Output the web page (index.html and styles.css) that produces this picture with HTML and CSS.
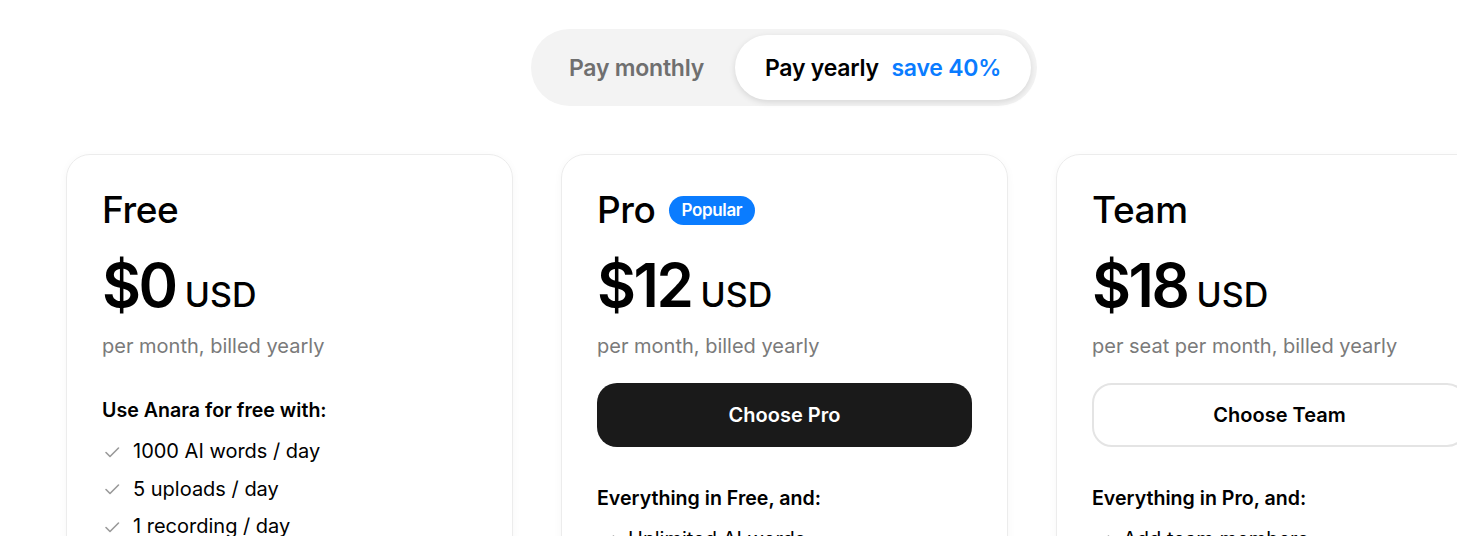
FILE: index.html
```html
<!DOCTYPE html>
<html lang="en">
<head>
<meta charset="utf-8">
<title>Pricing</title>
<link rel="stylesheet" href="styles.css">
</head>
<body>
<main class="page">
  <div class="toggle-row">
    <div class="toggle">
      <button class="opt">Pay monthly</button>
      <button class="opt active">Pay yearly <span class="save">save 40%</span></button>
    </div>
  </div>
  <section class="cards">
    <article class="card">
      <h2 class="plan">Free</h2>
      <div class="price"><span class="amount">$0</span><span class="cur">USD</span></div>
      <p class="sub">per month, billed yearly</p>
      <div class="features free">
        <h3 class="feat-title">Use Anara for free with:</h3>
        <ul>
          <li><svg class="check" viewBox="0 0 16 16"><path d="M2 8.5l4 4L14.5 4"/></svg>1000 AI words / day</li>
          <li><svg class="check" viewBox="0 0 16 16"><path d="M2 8.5l4 4L14.5 4"/></svg>5 uploads / day</li>
          <li><svg class="check" viewBox="0 0 16 16"><path d="M2 8.5l4 4L14.5 4"/></svg>1 recording / day</li>
        </ul>
      </div>
    </article>
    <article class="card">
      <h2 class="plan">Pro <span class="badge">Popular</span></h2>
      <div class="price"><span class="amount">$12</span><span class="cur">USD</span></div>
      <p class="sub">per month, billed yearly</p>
      <button class="cta dark">Choose Pro</button>
      <div class="features">
        <h3 class="feat-title">Everything in Free, and:</h3>
        <ul>
          <li><svg class="check" viewBox="0 0 16 16"><path d="M2 8.5l4 4L14.5 4"/></svg>Unlimited AI words</li>
        </ul>
      </div>
    </article>
    <article class="card">
      <h2 class="plan">Team</h2>
      <div class="price"><span class="amount">$18</span><span class="cur">USD</span></div>
      <p class="sub">per seat per month, billed yearly</p>
      <button class="cta light">Choose Team</button>
      <div class="features">
        <h3 class="feat-title">Everything in Pro, and:</h3>
        <ul>
          <li><svg class="check" viewBox="0 0 16 16"><path d="M2 8.5l4 4L14.5 4"/></svg>Add team members</li>
        </ul>
      </div>
    </article>
  </section>
</main>
</body>
</html>
```

FILE: styles.css
```css
html, body {
  margin: 0;
  padding: 0;
  background: #fff;
  overflow: hidden;
}
body {
  font-family: Inter, "Liberation Sans", sans-serif;
  color: #000;
}
.page {
  width: 1568px;
}
.toggle-row {
  display: flex;
  justify-content: center;
  padding-top: 29px;
}
.toggle {
  display: flex;
  background: #f3f3f3;
  border-radius: 999px;
  padding: 6px;
}
.opt {
  font-family: inherit;
  font-size: 23px;
  font-weight: 600;
  letter-spacing: -0.01em;
  color: #6f6f6f;
  background: transparent;
  border: 0;
  border-radius: 999px;
  height: 65px;
  padding: 0 31px 0 32px;
  cursor: pointer;
}
.opt.active {
  background: #fff;
  color: #000;
  padding: 0 30px;
  box-shadow: 0 2px 6px rgba(0,0,0,0.12);
}
.save {
  color: #0a7cff;
  margin-left: 7px;
}
.cards {
  display: flex;
  gap: 48px;
  padding: 48px 66px 0;
}
.card {
  flex: 0 0 447px;
  box-sizing: border-box;
  border: 1px solid #ececec;
  border-radius: 24px;
  box-shadow: 0 2px 8px rgba(0,0,0,0.04);
  padding: 30px 35px 40px;
  height: 420px;
}
.plan {
  margin: 0;
  font-size: 37px;
  font-weight: 500;
  letter-spacing: -0.01em;
  display: flex;
  align-items: center;
  gap: 13px;
  line-height: 50px;
}
.badge {
  background: #0a7cff;
  color: #fff;
  font-size: 17px;
  font-weight: 600;
  border-radius: 999px;
  padding: 0 13px;
  line-height: 29px;
  height: 29px;
}
.price {
  display: flex;
  align-items: baseline;
  gap: 9px;
  margin-top: 15px;
}
.amount {
  font-size: 60px;
  font-weight: 600;
  letter-spacing: -0.04em;
  line-height: 70px;
}
.cur {
  font-size: 34px;
  font-weight: 500;
}
.sub {
  margin: 13px 0 0;
  font-size: 20px;
  color: #7a7a7a;
  line-height: 26px;
}
.cta {
  display: block;
  width: 100%;
  height: 64px;
  margin-top: 24px;
  border-radius: 20px;
  font-family: inherit;
  font-size: 20px;
  font-weight: 600;
  cursor: pointer;
}
.cta.dark {
  background: #1a1a1a;
  color: #fff;
  border: 0;
}
.cta.light {
  background: #fff;
  color: #000;
  border: 2px solid #e4e4e4;
}
.features {
  margin-top: 38px;
}
.features.free {
  margin-top: 38px;
}
.feat-title {
  margin: 0;
  font-size: 19.6px;
  font-weight: 600;
  line-height: 26px;
}
.features ul {
  list-style: none;
  margin: 10px 0 0;
  padding: 0;
}
.features li {
  display: flex;
  align-items: center;
  gap: 13px;
  font-size: 20px;
  line-height: 37.5px;
}
.check {
  width: 16px;
  height: 16px;
  margin-left: 2px;
  fill: none;
  stroke: #9a9a9a;
  stroke-width: 1.6;
  stroke-linecap: round;
  stroke-linejoin: round;
}
```
